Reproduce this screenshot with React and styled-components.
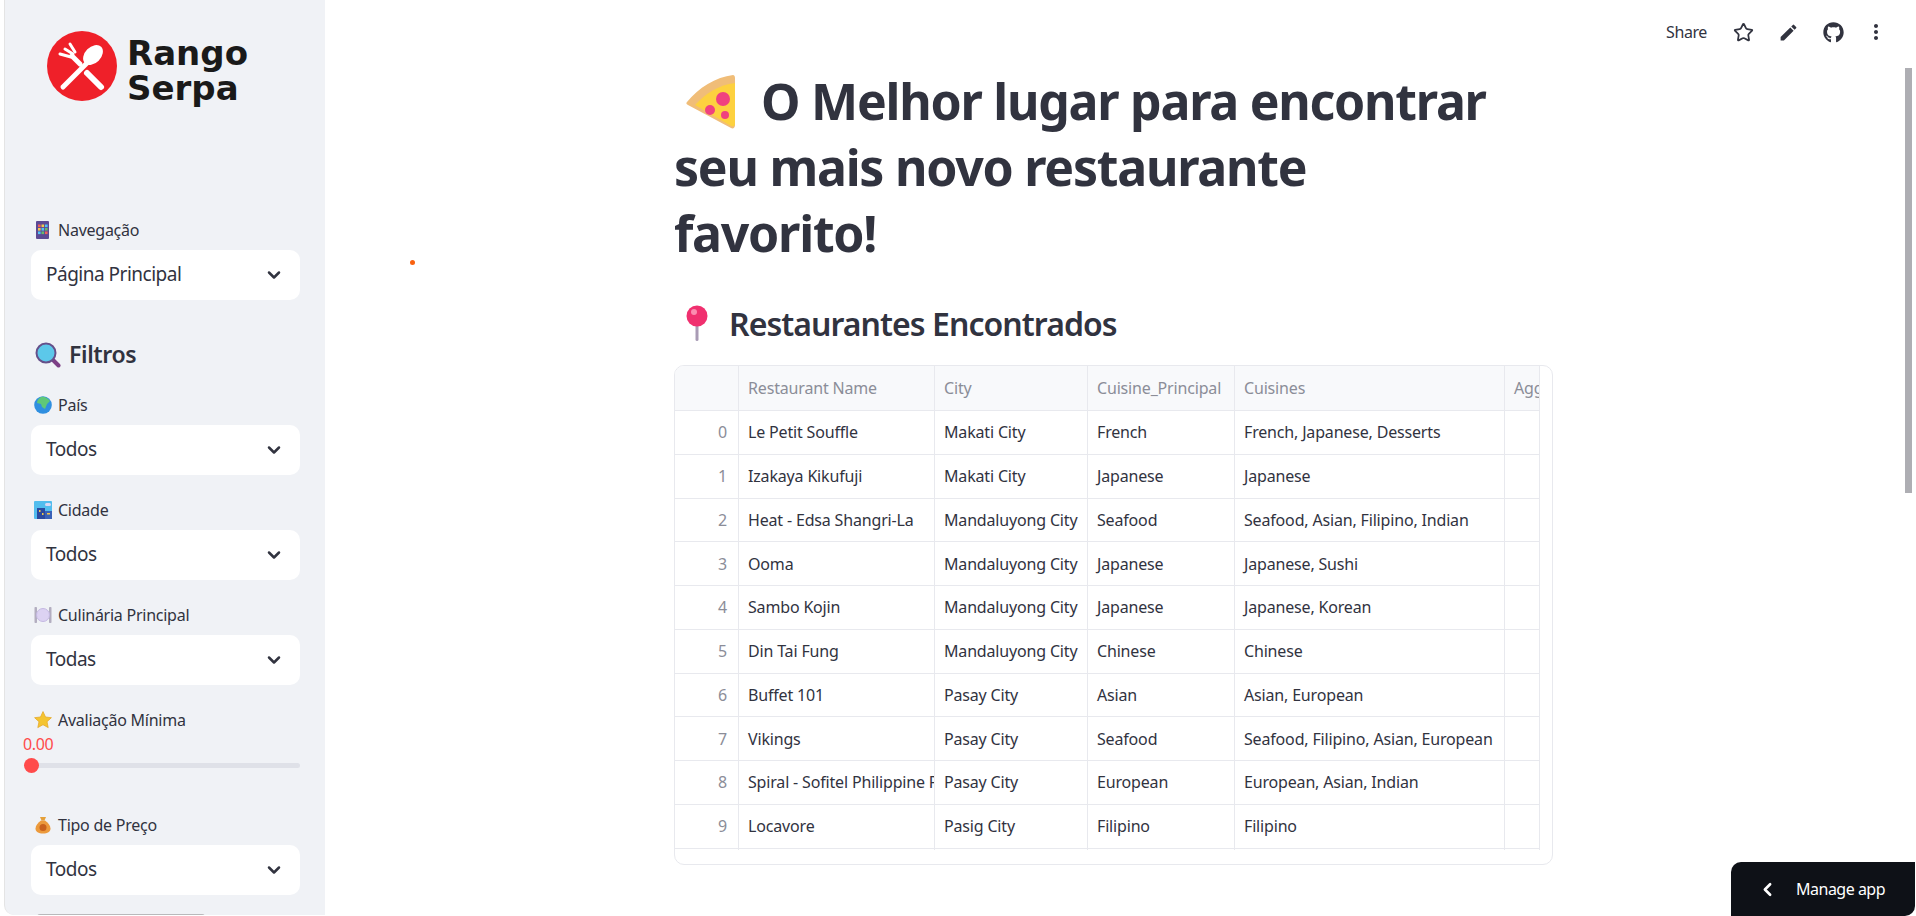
import React from "react";
import styled, { createGlobalStyle } from "styled-components";
import { Star, ChevronLeft, ChevronDown } from "lucide-react";
import { FaGithub } from "react-icons/fa";
import { MdEdit, MdMoreVert } from "react-icons/md";

const GlobalStyle = createGlobalStyle`
  html, body { margin: 0; padding: 0; height: 100%; overflow: hidden; background: #fff; }
  body { font-family: "Noto Sans", sans-serif; color: #31333f; }
  * { box-sizing: border-box; }
`;

const Page = styled.div`
  display: flex;
  height: 916px;
  position: relative;
  overflow: hidden;
`;

const Sidebar = styled.aside`
  flex: 0 0 321px;
  height: 915px;
  margin-left: 4px;
  padding: 31px 25px 0 26px;
  background: #f0f2f6;
  border-left: 1px solid #e4e4e4;
  border-bottom-left-radius: 10px;
  display: flex;
  flex-direction: column;
  gap: 25px;
  overflow: hidden;
  & > * { flex-shrink: 0; }
`;

const Logo = styled.div`
  display: flex;
  align-items: flex-start;
  gap: 10px;
  height: 70px;
  margin: 0 0 94px 16px;
`;

const LogoText = styled.div`
  font-family: "DejaVu Sans", sans-serif;
  font-weight: 700;
  font-size: 34px;
  line-height: 35px;
  letter-spacing: 0;
  color: #1a1a1a;
  margin-top: 5px;
`;

const Field = styled.div`
  display: flex;
  flex-direction: column;
`;

const Label = styled.div`
  display: flex;
  align-items: center;
  gap: 6px;
  height: 20px;
  padding-left: 3px;
  font-size: 16px;
  letter-spacing: -0.25px;
  color: #31333f;
  margin-bottom: 10px;
`;

const Select = styled.div`
  height: 50px;
  background: #fff;
  border-radius: 10px;
  padding: 0 16px 0 15px;
  display: flex;
  align-items: center;
  justify-content: space-between;
  font-size: 19px;
  letter-spacing: -0.5px;
  color: #31333f;
`;

const SelectText = styled.span`
  margin-top: -3px;
`;

const FilterTitle = styled.div`
  display: flex;
  align-items: center;
  gap: 8px;
  height: 30px;
  margin-top: 15px;
  padding-left: 4px;
  font-size: 23px;
  font-weight: 600;
  letter-spacing: -0.35px;
`;

const FilterText = styled.span`
  margin-top: -2px;
`;

const SliderBox = styled.div`
  height: 80px;
  display: flex;
  flex-direction: column;
`;

const SliderValue = styled.div`
  height: 20px;
  margin: -6px 0 0 -8px;
  font-size: 16px;
  letter-spacing: -0.4px;
  color: #ff4b4b;
  line-height: 20px;
`;

const Track = styled.div`
  position: relative;
  height: 5px;
  margin-top: 9px;
  border-radius: 3px;
  background: #dfe1e8;
`;

const Thumb = styled.div`
  position: absolute;
  left: -7px;
  top: -5px;
  width: 15px;
  height: 15px;
  border-radius: 50%;
  background: #ff4b4b;
`;

const PeekButton = styled.div`
  height: 3px;
  width: 168px;
  margin: -6px 0 0 6px;
  background: #b9b9bb;
  border-radius: 3px 3px 0 0;
`;

const Main = styled.main`
  flex: 1;
  position: relative;
  padding: 68px 0 0 349px;
`;

const Block = styled.div`
  width: 879px;
`;

const Title = styled.h1`
  margin: 0;
  font-size: 50px;
  line-height: 66px;
  font-weight: 700;
  letter-spacing: -1.25px;
  color: #31333f;
`;

const TitleIcon = styled.svg`
  width: 50px;
  height: 55px;
  vertical-align: -9px;
  margin: 0 25px 0 12px;
`;

const Subtitle = styled.h3`
  display: flex;
  align-items: center;
  gap: 21px;
  margin: 36px 0 21px;
  padding-left: 12px;
  height: 42px;
  font-size: 32px;
  font-weight: 600;
  letter-spacing: -0.95px;
  color: #31333f;
`;

const TableFrame = styled.div`
  width: 879px;
  height: 500px;
  border: 1px solid #e8e9ee;
  border-radius: 10px;
  overflow: hidden;
`;

const TableCanvas = styled.div`
  width: 865px;
  height: 484px;
  overflow: hidden;
`;

const COLUMNS = "64px 196px 153px 147px 270px 35px";

const Row = styled.div`
  display: grid;
  grid-template-columns: ${COLUMNS};
  height: ${(p) => p.$height};
  background: ${(p) => (p.$head ? "#f8f9fb" : "#fff")};
  border-bottom: 1px solid #e8e9ee;
  &:last-child { border-bottom: none; }
`;

const Cell = styled.div`
  display: flex;
  align-items: center;
  justify-content: ${(p) => (p.$index ? "flex-end" : "flex-start")};
  padding: ${(p) => (p.$index ? "0 11px 0 0" : "0 0 0 9px")};
  border-right: 1px solid #e8e9ee;
  font-size: 16px;
  letter-spacing: -0.17px;
  color: ${(p) => (p.$head || p.$index ? "#8b8d98" : "#31333f")};
  white-space: nowrap;
  overflow: hidden;
`;

const Toolbar = styled.div`
  position: absolute;
  top: 16px;
  right: 21px;
  display: flex;
  align-items: center;
  height: 32px;
  color: #31333f;
`;

const ShareLabel = styled.span`
  font-size: 16px;
  letter-spacing: -0.4px;
  margin-right: 14px;
`;

const ToolIcon = styled.span`
  display: flex;
  justify-content: center;
  width: ${(p) => p.$width || 45}px;
`;

const Scrollbar = styled.div`
  position: absolute;
  top: 68px;
  right: 4px;
  width: 7px;
  height: 425px;
  background: #aeaeb3;
`;

const Dot = styled.div`
  position: absolute;
  left: 410px;
  top: 260px;
  width: 5px;
  height: 5px;
  border-radius: 50%;
  background: #f9610f;
`;

const ManageApp = styled.div`
  position: absolute;
  right: 1px;
  bottom: 0;
  width: 184px;
  height: 54px;
  display: flex;
  align-items: center;
  padding-left: 26px;
  gap: 18px;
  background: #0e1117;
  color: #fff;
  border-radius: 10px 0 10px 0;
  font-size: 16px;
  letter-spacing: -0.5px;
`;

const EmojiSvg = styled.svg`
  width: ${(p) => p.$size || 18}px;
  height: ${(p) => p.$size || 18}px;
  flex: none;
`;

const Abacus = () => (
  <EmojiSvg viewBox="0 0 18 18">
    <rect x="2" y="0" width="13" height="18" rx="1" fill="#5d4a94" />
    {[3.5, 7, 10.5].map((y, r) =>
      [4, 7.5, 11].map((x, c) => (
        <rect key={`${r}-${c}`} x={x} y={y} width="2.6" height="2.6" fill={["#f25f5c", "#f2c94c", "#4fc3f7", "#66bb6a"][(r + c) % 4]} />
      ))
    )}
  </EmojiSvg>
);

const Magnifier = () => (
  <EmojiSvg $size={26} viewBox="0 0 26 26">
    <line x1="17" y1="17" x2="23.5" y2="23.5" stroke="#7d3f86" strokeWidth="4" strokeLinecap="round" />
    <circle cx="11" cy="11" r="9.5" fill="#5cc8ea" stroke="#65508a" strokeWidth="2" />
  </EmojiSvg>
);

const Globe = () => (
  <EmojiSvg viewBox="0 0 18 18">
    <circle cx="9" cy="9" r="8.8" fill="#2f8fe0" />
    <path d="M7 1c3-1 7 1 9 4l-3 3-2 5-3-2-1-3-4-1c0-3 2-5 4-6z" fill="#5fc878" />
  </EmojiSvg>
);

const City = () => (
  <EmojiSvg viewBox="0 0 18 18">
    <rect width="18" height="18" rx="1" fill="#52bdee" />
    <rect x="11" y="2" width="6" height="3" rx="1.5" fill="#dcd8f5" />
    <rect x="3" y="7" width="8" height="11" fill="#2a4aa0" />
    <rect x="11" y="10" width="7" height="8" fill="#3a62b8" />
    <rect x="5" y="9" width="1.5" height="2" fill="#f2c94c" />
    <rect x="8" y="12" width="1.5" height="2" fill="#f2c94c" />
    <rect x="13" y="12" width="3" height="1.5" fill="#f2c94c" />
  </EmojiSvg>
);

const Plate = () => (
  <EmojiSvg viewBox="0 0 18 18">
    <rect x="0.5" y="1" width="2.5" height="16" rx="0.8" fill="#b3aec0" />
    <rect x="15" y="1" width="2.5" height="16" rx="0.8" fill="#b3aec0" />
    <circle cx="9" cy="9" r="6.5" fill="#dcd2f2" stroke="#c4b8e2" strokeWidth="1" />
  </EmojiSvg>
);

const StarEmoji = () => (
  <EmojiSvg viewBox="0 0 18 18">
    <path d="M9 .6l2.5 5.4 5.9.7-4.4 4 1.2 5.9L9 13.7l-5.2 2.9L5 10.7.6 6.7l5.9-.7z" fill="#f4c430" stroke="#e6a92a" strokeWidth="0.8" strokeLinejoin="round" />
  </EmojiSvg>
);

const MoneyBag = () => (
  <EmojiSvg viewBox="0 0 18 18">
    <path d="M6 1h6l-1.5 3.5h-3z" fill="#e5a03a" />
    <path d="M7 4.5h4c3 2 5.5 5 5.5 8 0 3.5-3 5-7.5 5s-7.5-1.5-7.5-5c0-3 2.500-6 5.500-8z" fill="#ec9a3c" />
    <circle cx="9" cy="11.500" r="3.500" fill="#c9611d" />
  </EmojiSvg>
);

const SelectBox = ({ value }) => (
  <Select>
    <SelectText>{value}</SelectText>
    <ChevronDown size={20} strokeWidth={3} color="#31333f" />
  </Select>
);

const HEAD = ["", "Restaurant Name", "City", "Cuisine_Principal", "Cuisines", "Aggregate rating"];

const ROWS = [
  ["0", "Le Petit Souffle", "Makati City", "French", "French, Japanese, Desserts", ""],
  ["1", "Izakaya Kikufuji", "Makati City", "Japanese", "Japanese", ""],
  ["2", "Heat - Edsa Shangri-La", "Mandaluyong City", "Seafood", "Seafood, Asian, Filipino, Indian", ""],
  ["3", "Ooma", "Mandaluyong City", "Japanese", "Japanese, Sushi", ""],
  ["4", "Sambo Kojin", "Mandaluyong City", "Japanese", "Japanese, Korean", ""],
  ["5", "Din Tai Fung", "Mandaluyong City", "Chinese", "Chinese", ""],
  ["6", "Buffet 101", "Pasay City", "Asian", "Asian, European", ""],
  ["7", "Vikings", "Pasay City", "Seafood", "Seafood, Filipino, Asian, European", ""],
  ["8", "Spiral - Sofitel Philippine Plaza Manila", "Pasay City", "European", "European, Asian, Indian", ""],
  ["9", "Locavore", "Pasig City", "Filipino", "Filipino", ""],
];

export default function App() {
  return (
    <>
      <GlobalStyle />
      <Page>
        <Sidebar>
          <Logo>
            <svg width="70" height="70" viewBox="0 0 70 70">
              <circle cx="35" cy="35" r="35" fill="#ef2029" />
              <g stroke="#fff" strokeLinecap="round" fill="none">
                <line x1="16" y1="56" x2="41" y2="31" strokeWidth="5" />
                <line x1="40" y1="42" x2="54" y2="56" strokeWidth="6" />
                <line x1="33" y1="33" x2="25" y2="25" strokeWidth="5" />
                <line x1="24" y1="26" x2="13" y2="23" strokeWidth="3" />
                <line x1="26" y1="23" x2="18" y2="18" strokeWidth="3" />
                <line x1="28" y1="21" x2="23" y2="13" strokeWidth="3" />
              </g>
              <ellipse cx="46" cy="24" rx="8" ry="11.500" fill="#fff" transform="rotate(45 46 24)" />
            </svg>
            <LogoText>
              Rango
              <br />
              Serpa
            </LogoText>
          </Logo>

          <Field>
            <Label>
              <Abacus />
              Navegação
            </Label>
            <SelectBox value="Página Principal" />
          </Field>

          <FilterTitle>
            <Magnifier />
            <FilterText>Filtros</FilterText>
          </FilterTitle>

          <Field>
            <Label>
              <Globe />
              País
            </Label>
            <SelectBox value="Todos" />
          </Field>

          <Field>
            <Label>
              <City />
              Cidade
            </Label>
            <SelectBox value="Todos" />
          </Field>

          <Field>
            <Label>
              <Plate />
              Culinária Principal
            </Label>
            <SelectBox value="Todas" />
          </Field>

          <SliderBox>
            <Label>
              <StarEmoji />
              Avaliação Mínima
            </Label>
            <SliderValue>0.00</SliderValue>
            <Track>
              <Thumb />
            </Track>
          </SliderBox>

          <Field>
            <Label>
              <MoneyBag />
              Tipo de Preço
            </Label>
            <SelectBox value="Todos" />
          </Field>

          <PeekButton />
        </Sidebar>

        <Main>
          <Block>
            <Title>
              <TitleIcon viewBox="0 0 50 55">
                <path d="M47 1C30 3 12 14 1 28c-1 1-1 2 1 3l43 23c2 1 4 0 4-3V4c0-2-1-3-2-3z" fill="#f0bd78" />
                <path d="M49 9C33 11 20 19 9 31l36 21c2 1 4 0 4-2z" fill="#fdd13f" />
                <circle cx="37" cy="25" r="7" fill="#f0417f" />
                <circle cx="24" cy="36" r="5" fill="#f0417f" />
                <circle cx="39" cy="41" r="4" fill="#f0417f" />
              </TitleIcon>
              O Melhor lugar para encontrar
              <br />
              seu mais novo restaurante
              <br />
              favorito!
            </Title>

            <Subtitle>
              <svg width="22" height="36" viewBox="0 0 22 36" style={{ flex: "none" }}>
                <rect x="9.500" y="18" width="3" height="18" rx="1.500" fill="#a99bb5" />
                <circle cx="11" cy="11" r="10.500" fill="#f0306f" />
                <circle cx="8" cy="7" r="3" fill="#fb8db0" />
              </svg>
              Restaurantes Encontrados
            </Subtitle>

            <TableFrame>
              <TableCanvas>
                <Row $head $height="45px">
                  {HEAD.map((h, i) => (
                    <Cell key={i} $head>
                      {h}
                    </Cell>
                  ))}
                </Row>
                {ROWS.map((row) => (
                  <Row key={row[0]} $height="43.75px">
                    {row.map((c, i) => (
                      <Cell key={i} $index={i === 0}>
                        {c}
                      </Cell>
                    ))}
                  </Row>
                ))}
                <Row $height="3px">
                  {HEAD.map((h, i) => (
                    <Cell key={i} />
                  ))}
                </Row>
              </TableCanvas>
            </TableFrame>
          </Block>
        </Main>

        <Dot />
        <Scrollbar />

        <Toolbar>
          <ShareLabel>Share</ShareLabel>
          <ToolIcon>
            <Star size={21} strokeWidth={2} />
          </ToolIcon>
          <ToolIcon>
            <MdEdit size={21} />
          </ToolIcon>
          <ToolIcon>
            <FaGithub size={21} />
          </ToolIcon>
          <ToolIcon $width={39}>
            <MdMoreVert size={24} />
          </ToolIcon>
        </Toolbar>

        <ManageApp>
          <ChevronLeft size={21} strokeWidth={3} />
          Manage app
        </ManageApp>
      </Page>
    </>
  );
}
